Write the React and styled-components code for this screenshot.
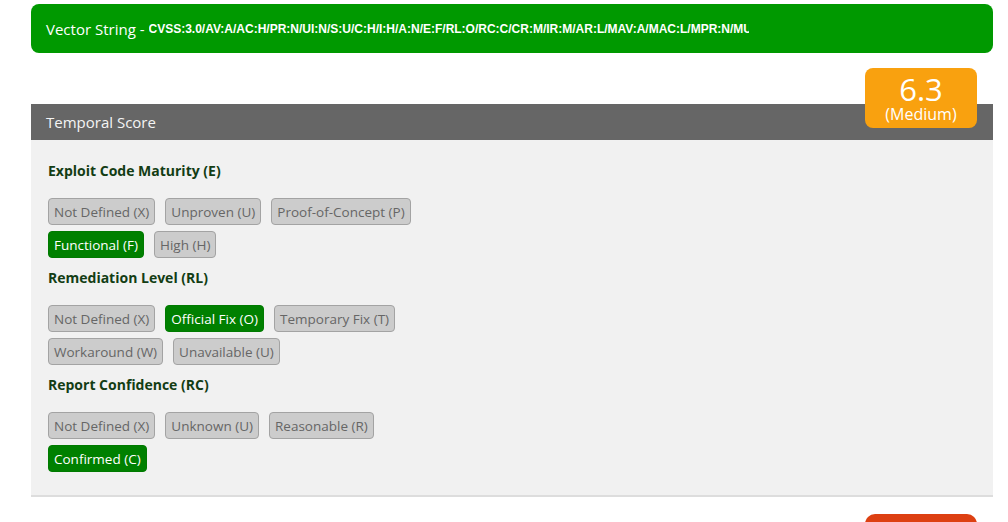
import React from "react";
import styled, { createGlobalStyle } from "styled-components";

const GlobalStyle = createGlobalStyle`
  body {
    margin: 0;
    background: #ffffff;
    font-family: "Open Sans", "Liberation Sans", sans-serif;
  }
`;

const Page = styled.div`
  width: 1008px;
  height: 522px;
  overflow: hidden;
  padding: 4px 15px 0 31px;
  box-sizing: border-box;
`;

const VectorBar = styled.div`
  height: 49px;
  background-color: #009900;
  border-radius: 8px;
  display: flex;
  align-items: center;
  padding-left: 15px;
  color: #ffffff;
  font-size: 15px;
  white-space: nowrap;
`;

const VectorCode = styled.span`
  display: inline-block;
  max-width: 600px;
  overflow: hidden;
  font-family: "Liberation Sans", Arial, sans-serif;
  font-weight: bold;
  font-size: 12px;
  margin-left: 4px;
`;

const Section = styled.div`
  position: relative;
  margin-top: 51px;
`;

const ScoreBadge = styled.div`
  position: absolute;
  right: 16px;
  top: -36px;
  width: 112px;
  height: 60px;
  border-radius: 8px;
  background-color: #f9a10f;
  color: #ffffff;
  display: flex;
  flex-direction: column;
  align-items: center;
  justify-content: center;
`;

const ScoreValue = styled.div`
  font-size: 31px;
  line-height: 32px;
`;

const ScoreLabel = styled.div`
  font-size: 16px;
  line-height: 18px;
`;

const PanelHeader = styled.div`
  height: 36px;
  background-color: #666666;
  color: #f4f4f4;
  font-size: 15px;
  display: flex;
  align-items: center;
  padding-left: 15px;
`;

const PanelBody = styled.div`
  background-color: #f1f1f1;
  padding: 21px 17px 23px;
  border-bottom: 2px solid #dddddd;
`;

const Metric = styled.div`
  & + & {
    margin-top: 10px;
  }
`;

const MetricTitle = styled.div`
  font-weight: bold;
  font-size: 14px;
  line-height: 20px;
  color: #133d14;
  margin-bottom: 17px;
`;

const Options = styled.div`
  display: flex;
  flex-direction: column;
  gap: 6px;
`;

const OptionRow = styled.div`
  display: flex;
  gap: 10px;
`;

const Option = styled.button`
  height: 27px;
  padding: 0 5px;
  border-radius: 4px;
  font-family: "Open Sans", "Liberation Sans", sans-serif;
  font-size: 13.5px;
  border: 1px solid ${(p) => (p.$active ? "#007a00" : "#a3a3a3")};
  background-color: ${(p) => (p.$active ? "#008000" : "#cccccc")};
  color: ${(p) => (p.$active ? "#ffffff" : "#666666")};
  cursor: pointer;
`;

const ActionButton = styled.div`
  margin: 17px 16px 0 auto;
  width: 112px;
  height: 30px;
  border-radius: 10px 10px 0 0;
  background-color: #dd4012;
`;

const metrics = [
  {
    title: "Exploit Code Maturity (E)",
    options: [
      "Not Defined (X)",
      "Unproven (U)",
      "Proof-of-Concept (P)",
      "Functional (F)",
      "High (H)",
    ],
    active: "Functional (F)",
  },
  {
    title: "Remediation Level (RL)",
    options: [
      "Not Defined (X)",
      "Official Fix (O)",
      "Temporary Fix (T)",
      "Workaround (W)",
      "Unavailable (U)",
    ],
    active: "Official Fix (O)",
  },
  {
    title: "Report Confidence (RC)",
    options: [
      "Not Defined (X)",
      "Unknown (U)",
      "Reasonable (R)",
      "Confirmed (C)",
    ],
    active: "Confirmed (C)",
  },
];

function rowsOf(list, size) {
  const rows = [];
  for (let i = 0; i < list.length; i += size) rows.push(list.slice(i, i + size));
  return rows;
}

function App() {
  return (
    <Page>
      <GlobalStyle />
      <VectorBar>
        Vector String -
        <VectorCode>
          CVSS:3.0/AV:A/AC:H/PR:N/UI:N/S:U/C:H/I:H/A:N/E:F/RL:O/RC:C/CR:M/IR:M/AR:L/MAV:A/MAC:L/MPR:N/MUI:N/MS:U/MC:H/MI:H/MA:N
        </VectorCode>
      </VectorBar>
      <Section>
        <ScoreBadge>
          <ScoreValue>6.3</ScoreValue>
          <ScoreLabel>(Medium)</ScoreLabel>
        </ScoreBadge>
        <PanelHeader>Temporal Score</PanelHeader>
        <PanelBody>
          {metrics.map((m) => (
            <Metric key={m.title}>
              <MetricTitle>{m.title}</MetricTitle>
              <Options>
                {rowsOf(m.options, 3).map((row, i) => (
                  <OptionRow key={i}>
                    {row.map((o) => (
                      <Option key={o} $active={o === m.active}>
                        {o}
                      </Option>
                    ))}
                  </OptionRow>
                ))}
              </Options>
            </Metric>
          ))}
        </PanelBody>
      </Section>
      <ActionButton />
    </Page>
  );
}

export default App;
